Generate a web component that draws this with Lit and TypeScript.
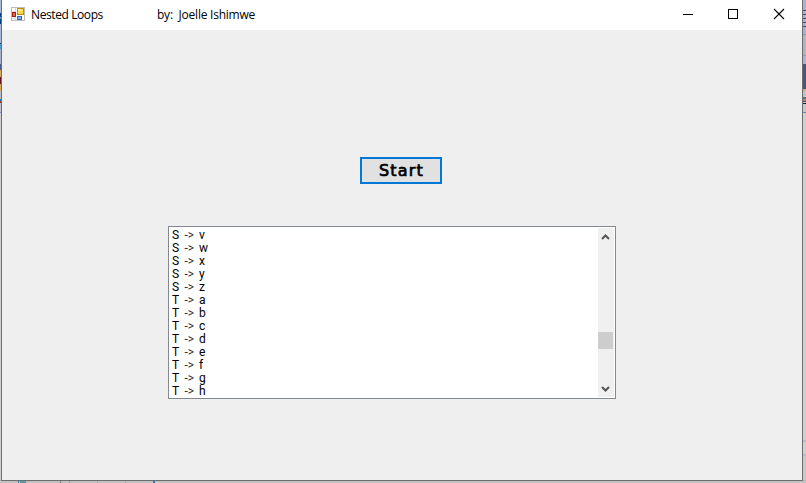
import { LitElement, html, css, svg } from "lit";
import { customElement } from "lit/decorators.js";

const rows = ["S v", "S w", "S x", "S y", "S z", "T a", "T b", "T c", "T d", "T e", "T f", "T g", "T h"].map((r) => r.split(" "));

const formIcon = svg`
  <rect x="0" y="0" width="14" height="14" fill="#bdbdbd"/>
  <rect x="1" y="1" width="12" height="12" fill="#fff"/>
  <path d="M4.5 1v12M1 4.5h4M1 11.5h4" stroke="#dcdcdc" fill="none"/>
  <rect x="6" y="1" width="7" height="7" fill="#c68c0c"/>
  <rect x="7" y="2" width="5" height="5" fill="#ffd84c"/>
  <rect x="7" y="2" width="3" height="2" fill="#ffeb9a"/>
  <rect x="1" y="5" width="4" height="5" fill="#a41c14"/>
  <rect x="2" y="6" width="2" height="3" fill="#e06a50"/>
  <rect x="6" y="9" width="5" height="4" fill="#3868cc"/>
  <rect x="7" y="10" width="3" height="2" fill="#86b2fa"/>`;

@customElement("app-root")
export class AppRoot extends LitElement {
  static styles = css`
    :host { display: grid; grid-template: 480px 3px / 1px 802px 3px; width: 806px; height: 483px; overflow: hidden; box-sizing: border-box; }
    .left { background: linear-gradient(#aebada 0 13px, #003c7c 13px 17px, #6895c8 17px 19px, #003c7c 19px 24px, #a8b6d8 24px 43px, #334864 43px 44px, #589bd5 44px 49px, #a8afc8 49px 64px, #4d5a88 64px 70px, #d2a95d 70px 77px, #631723 77px 84px, #d2a95d 84px 91px, #b9bdc7 91px 99px, #2475bb 99px 101px, #8c4021 101px 103px, #bfc1c8 103px 112px, #718cbd 112px 113px, #d1d1d1 113px); }
    .right { background: linear-gradient(#a8b2d4 0 10px, #484e70 10px 11px, #a8b2d4 11px 14px, #484e70 14px 15px, #a8b2d4 15px 18px, #484e70 18px 19px, #a8b2d4 19px 22px, #484e70 22px 23px, #a8b2d4 23px 26px, #484e70 26px 27px, #a8b2d4 27px 34px, #8f9bad 34px 35px, #acb5bf 35px 55px, #929cba 55px 56px, #a8b2d4 56px 64px, #475680 64px 89px, #d5ad65 89px 91px, #bfc2cb 91px 97px, #557594 97px 99px, #bc8757 99px 101px, #3f506c 101px 102px, #c3c5cc 102px 103px, #20242c 103px 104px, #c5c7cf 104px 112px, #7187b3 112px 113px, #d0d0d0 113px 440px, #bcbdc8 440px 442px, #d0d0d0 442px 454px, #bcbdc8 454px 456px, #c8c8c8 456px); }
    .under { grid-column: 1 / 4; background:
      linear-gradient(90deg, transparent 0 18px, #278299 18px 19px, transparent 19px 20px, #6095a3 20px 26px, transparent 26px 60px, #777 60px 61px, transparent 61px 69px, #999 69px 70px, transparent 70px 97px, #aaa 97px 98px, transparent 98px 125px, #aaa 125px 126px, transparent 126px 153px, #995d2b 153px 154px, #3f77b2 154px 155px, transparent 155px),
      linear-gradient(#b3b3b3, #cbcbcb); }
    .window { display: flex; flex-direction: column; box-sizing: border-box; width: 802px; height: 481px; border: 1px solid #6d6e70; border-top: 0; background: #efefef; z-index: 1; }
    .titlebar { display: flex; height: 30px; flex: none; background: #fff; font: 12px/30px "Open Sans", "Noto Sans", sans-serif; color: #000; white-space: pre; }
    .logo { margin: 7px 6px 0 9px; width: 14px; height: 14px; flex: none; }
    .name { width: 126px; letter-spacing: -0.4px; }
    .author { flex: 1; letter-spacing: -0.23px; }
    .controls { display: flex; }
    .controls svg { width: 46px; height: 30px; display: block; }
    .form { display: flex; flex-direction: column; align-items: flex-start; }
    .start { margin: 127px 0 0 358px; box-sizing: border-box; width: 82px; height: 27px; padding: 0; border: 2px solid #0078d7; border-radius: 0; background: #e1e1e1; color: #000; font: 16px/23px "DejaVu Sans", sans-serif; letter-spacing: 1.2px; text-indent: 1px; -webkit-text-stroke: 0.7px #000; text-align: center; }
    .list { display: flex; box-sizing: border-box; width: 448px; height: 173px; margin: 42px 0 0 166px; padding: 1px; border: 1px solid #828790; background: #fff; }
    .rows { flex: 1; padding: 1px 0 0 2px; font: 12px/13px Roboto, sans-serif; color: #000; }
    .row { display: grid; grid-template-columns: 12.5px 14.5px 1fr; height: 13px; }
    .arrow { color: #333; }
    .scroll { display: flex; flex-direction: column; width: 16px; background: #f0f0f0; }
    .scroll svg { width: 15px; height: 17px; display: block; }
    .thumb { width: 15px; height: 17px; margin: 87px 0 31px; background: #cdcdcd; }
  `;

  render() {
    return html`
      <div class="left"></div>
      <main class="window">
        <header class="titlebar">
          <svg class="logo" viewBox="0 0 14 14" shape-rendering="crispEdges">${formIcon}</svg>
          <span class="name">Nested Loops</span><span class="author">by:  Joelle Ishimwe</span>
          <div class="controls">
            <svg viewBox="0 0 46 30"><path d="M19 14.5h10" stroke="#000"/></svg>
            <svg viewBox="0 0 46 30"><rect x="18.5" y="9.5" width="9" height="9" fill="none" stroke="#000"/></svg>
            <svg viewBox="0 0 46 30"><path d="M18 9l10 10M28 9l-10 10" stroke="#000" stroke-width="1.1"/></svg>
          </div>
        </header>
        <section class="form">
          <button class="start">Start</button>
          <div class="list">
            <div class="rows">
              ${rows.map(([a, b]) => html`<div class="row"><span>${a}</span><span class="arrow">-&gt;</span><span>${b}</span></div>`)}
            </div>
            <div class="scroll">
              <svg viewBox="0 0 15 17"><path d="M4 11l3.5-3.5L11 11" fill="none" stroke="#555" stroke-width="2"/></svg>
              <div class="thumb"></div>
              <svg viewBox="0 0 15 17"><path d="M4 7L7.5 10.5 11 7" fill="none" stroke="#555" stroke-width="2"/></svg>
            </div>
          </div>
        </section>
      </main>
      <div class="right"></div>
      <div class="under"></div>
    `;
  }
}
